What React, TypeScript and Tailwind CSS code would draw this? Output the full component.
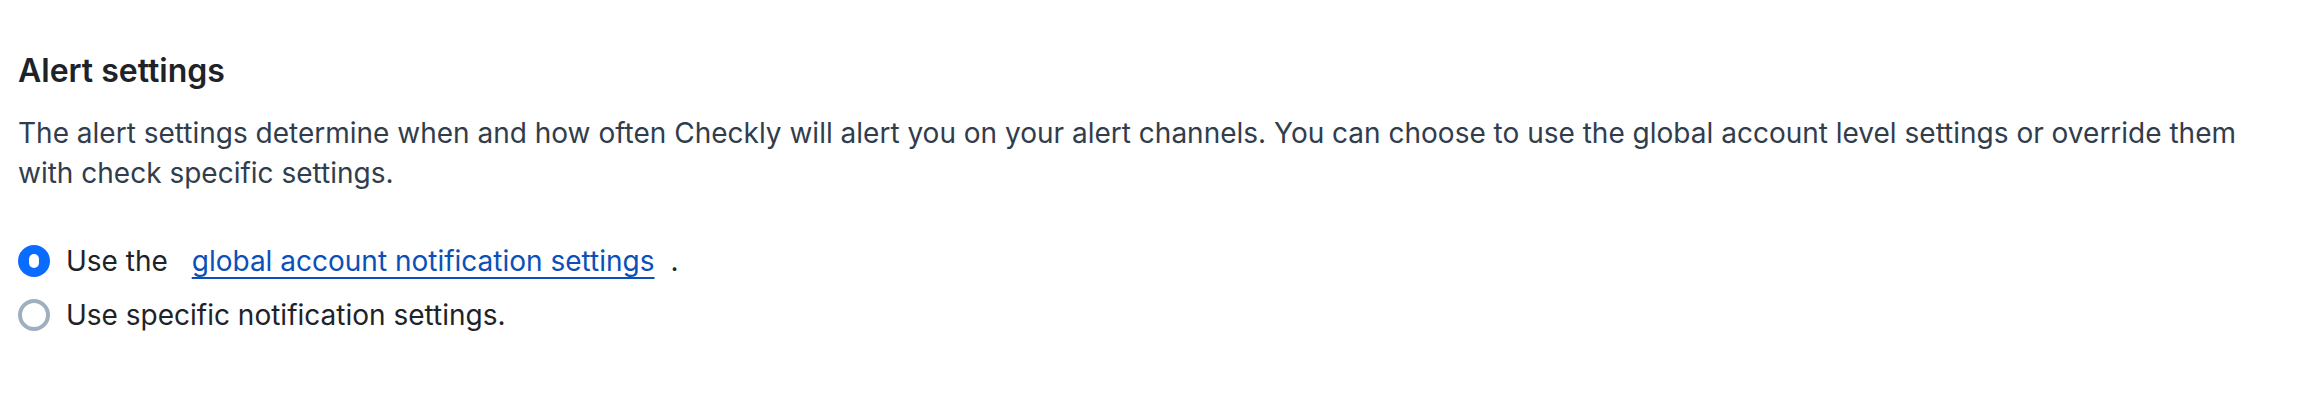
import React, { useState } from 'react';

const options = [
  { key: 'global', label: 'global' },
  { key: 'specific', label: 'specific' },
];

const Radio = ({ checked }: { checked: boolean }) =>
  checked ? (
    <span className="flex h-[32px] w-[32px] shrink-0 items-center justify-center rounded-full bg-[#0a6cff]">
      <span className="h-[14px] w-[10px] rounded-full bg-white" />
    </span>
  ) : (
    <span className="h-[32px] w-[32px] shrink-0 rounded-full border-[4px] border-[#9eb0c0] bg-white" />
  );

export default function App() {
  const [value, setValue] = useState('global');

  return (
    <div className="min-h-[400px] bg-white pl-[18px] pr-[60px] pt-[51px] font-['Inter',sans-serif]">
      <h2 className="text-[32px] font-semibold leading-[40px] text-[#1e2329]">Alert settings</h2>
      <p className="mt-[22px] text-[28px] leading-[40px] text-[#313d4c]">
        The alert settings determine when and how often Checkly will alert you on your alert channels. You can choose to use the global account level settings or override them with check specific settings.
      </p>

      <div className="mt-[48px] flex flex-col gap-[14px]">
        {options.map((option) => (
          <label
            key={option.key}
            onClick={() => setValue(option.key)}
            className="flex cursor-pointer items-center gap-[16px] text-[28px] leading-[40px] text-[#1e2329]"
          >
            <Radio checked={value === option.key} />
            {option.key === 'global' ? (
              <span>
                Use the{' '}
                <a href="#" className="ml-[16px] mr-[16px] text-[#0b50b8] underline underline-offset-[6px] decoration-[2px]">
                  global account notification settings
                </a>
                .
              </span>
            ) : (
              <span>Use specific notification settings.</span>
            )}
          </label>
        ))}
      </div>
    </div>
  );
}
